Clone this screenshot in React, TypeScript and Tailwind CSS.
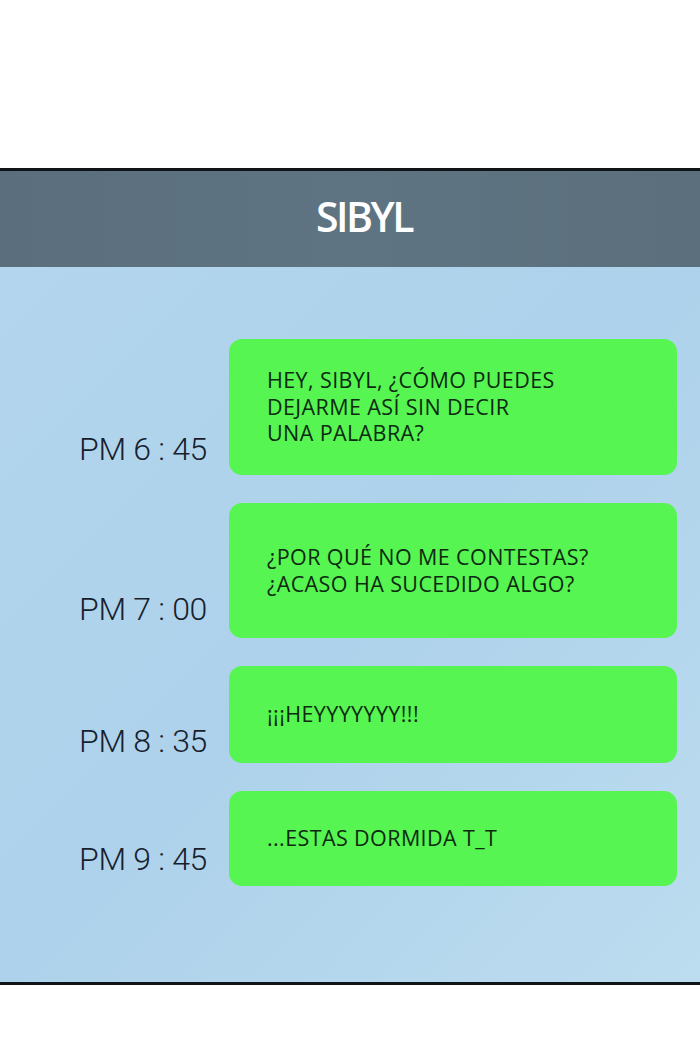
import React from 'react';

interface Message {
  time: string;
  lines: string[];
  height: string;
  timeOffset: string;
}

const messages: Message[] = [
  {
    time: 'PM 6 : 45',
    lines: ['HEY, SIBYL, ¿CÓMO PUEDES', 'DEJARME ASÍ SIN DECIR', 'UNA PALABRA?'],
    height: 'h-[136px]',
    timeOffset: 'mb-[10px]',
  },
  {
    time: 'PM 7 : 00',
    lines: ['¿POR QUÉ NO ME CONTESTAS?', '¿ACASO HA SUCEDIDO ALGO?'],
    height: 'h-[135px]',
    timeOffset: 'mb-[13px]',
  },
  {
    time: 'PM 8 : 35',
    lines: ['¡¡¡HEYYYYYYY!!!'],
    height: 'h-[97px]',
    timeOffset: 'mb-[6px]',
  },
  {
    time: 'PM 9 : 45',
    lines: ['...ESTAS DORMIDA T_T'],
    height: 'h-[95px]',
    timeOffset: 'mb-[11px]',
  },
];

const ChatRow: React.FC<{ msg: Message }> = ({ msg }) => (
  <div className="flex items-end">
    <div
      className={`w-[150px] pl-[79px] whitespace-nowrap text-[32px] leading-none font-light text-[#17212e] tracking-[-0.3px] ${msg.timeOffset}`}
      style={{ fontFamily: 'Roboto, "Liberation Sans", sans-serif' }}
    >
      {msg.time}
    </div>
    <div
      className={`ml-[79px] w-[448px] ${msg.height} rounded-[13px] bg-[#56f551] flex flex-col justify-center pl-[38px] text-[#0d2a10] text-[21.5px] leading-[26.5px] tracking-[0.4px]`}
      style={{ fontFamily: '"Open Sans", "Liberation Sans", sans-serif' }}
    >
      {msg.lines.map((line) => (
        <span key={line} className="whitespace-nowrap">
          {line}
        </span>
      ))}
    </div>
  </div>
);

export default function App() {
  return (
    <div className="w-[700px] h-[1039px] bg-white flex flex-col overflow-hidden">
      <div className="h-[168px]" />
      <div className="h-[3px] bg-[#111417]" />
      <header className="h-[96px] bg-gradient-to-r from-[#5a6e7d] via-[#5f7482] to-[#5b6f7d] flex items-center justify-center">
        <h1
          className="text-white text-[41px] font-semibold tracking-[-2.5px] ml-[28px] mb-[4px]"
          style={{ fontFamily: '"Open Sans", "Liberation Sans", sans-serif' }}
        >
          SIBYL
        </h1>
      </header>
      <main className="h-[715px] bg-gradient-to-br from-[#b3d5ee] via-[#aed2eb] to-[#bcdcef] flex flex-col gap-[28px] pt-[72px]">
        {messages.map((m) => (
          <ChatRow key={m.time} msg={m} />
        ))}
      </main>
      <div className="h-[3px] bg-[#0e1418]" />
      <div className="flex-1 bg-white" />
    </div>
  );
}
